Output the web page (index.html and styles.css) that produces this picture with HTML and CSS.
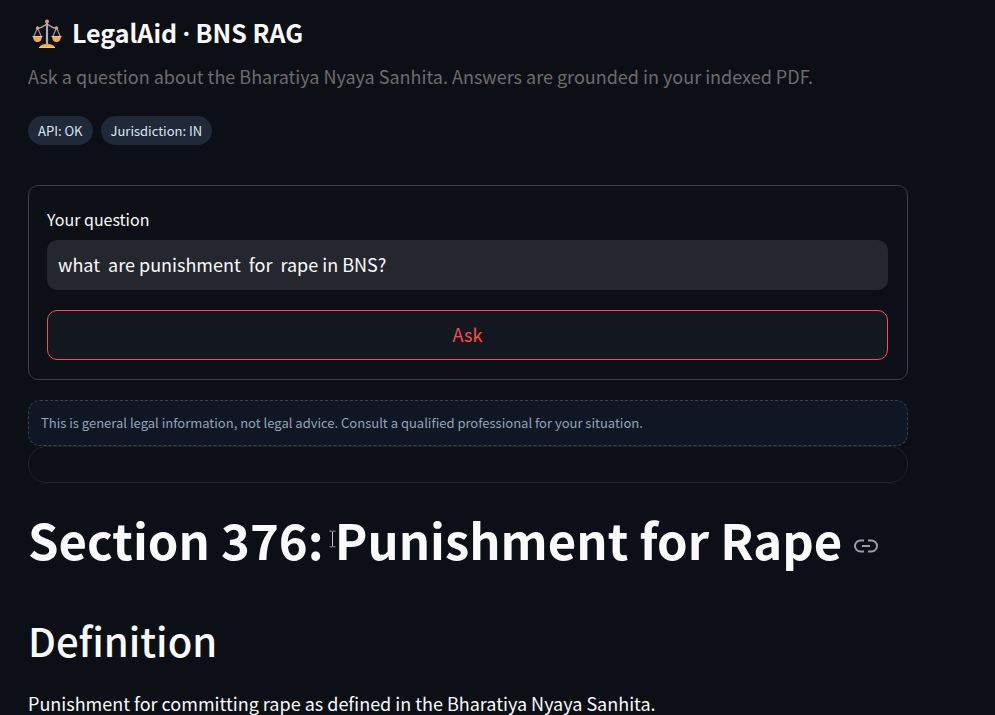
FILE: index.html
```html
<!DOCTYPE html>
<html lang="en">
<head>
<meta charset="utf-8">
<meta name="viewport" content="width=device-width, initial-scale=1">
<title>LegalAid · BNS RAG</title>
<link rel="stylesheet" href="styles.css">
</head>
<body>
<main class="page">
  <header class="header">
    <div class="brand">
      <svg class="brand-icon" viewBox="0 0 30 30" aria-hidden="true">
        <g fill="none" stroke="#998ea1" stroke-width="1.200">
          <path d="M5.500 9 1.500 18M5.500 9 9.500 18M24.500 9 20.500 18M24.500 9 28.500 18"/>
        </g>
        <path d="M5 9.500Q10 9 12.500 6.500Q15 4.500 17.500 6.500Q20 9 25 9.500" fill="none" stroke="#aaa0b2" stroke-width="1.500"/>
        <path d="M15 4V25" stroke="#b4a9bb" stroke-width="2.200"/>
        <path d="M1 17.500H10Q9.500 23 5.500 23T1 17.500ZM20 17.500H29Q28.500 23 24.500 23T20 17.500Z" fill="#f2a968"/>
        <path d="M0.500 17.500H10.500M19.500 17.500H29.500" stroke="#ffc879"/>
        <path d="M7 29Q8 25 15 25T23 29Z" fill="#f5b447"/>
        <path d="M7 28.500H23" stroke="#ffcf59"/>
        <g fill="#e99b65"><circle cx="15" cy="2.500" r="2"/><circle cx="5.500" cy="9" r="1.700"/><circle cx="24.500" cy="9" r="1.700"/></g>
      </svg>
      <span>LegalAid <span class="dot">·</span> BNS RAG</span>
    </div>
    <p class="tagline">Ask a question about the Bharatiya Nyaya Sanhita. Answers are grounded in your indexed PDF.</p>
    <div class="pills">
      <span class="pill">API: OK</span>
      <span class="pill">Jurisdiction: IN</span>
    </div>
  </header>

  <form class="ask-form">
    <label class="label" for="question">Your question</label>
    <input class="question" id="question" type="text" value="what  are punishment  for  rape in BNS?">
    <button class="ask" type="button">Ask</button>
  </form>

  <div class="notice">This is general legal information, not legal advice. Consult a qualified professional for your situation.</div>
  <div class="card"></div>

  <article class="answer">
    <h1 class="title" id="section-376">Section 376: <span class="anchor-word"><svg class="caret" viewBox="0 0 7 17" aria-hidden="true"><path d="M0.500 0.500H3M4 0.500H6.500M3.500 1V16M0.500 16.500H3M4 16.500H6.500"/></svg>Punishment</span> for Rape<a class="permalink" href="#section-376" aria-label="Link to heading"><svg viewBox="0 0 24 24" aria-hidden="true"><path d="M10 6.500H6.500a5.500 5.500 0 0 0 0 11H10M14 6.500H17.500a5.500 5.500 0 0 1 0 11H14M8 12H16"/></svg></a></h1>
    <h2 class="subtitle">Definition</h2>
    <p class="text">Punishment for committing rape as defined in the Bharatiya Nyaya Sanhita.</p>
  </article>
</main>
</body>
</html>
```
FILE: styles.css
```css
* {
  box-sizing: border-box;
}

body {
  margin: 0;
  background: #0c0f16;
  color: #fafafa;
  font-family: "Noto Sans CJK SC", "Noto Sans", sans-serif;
  font-size: 18px;
  line-height: 28px;
}

.page {
  max-width: 936px;
  padding: 14px 28px 0;
}

h1, h2, p {
  margin: 0;
}

.brand {
  display: flex;
  align-items: center;
  gap: 10px;
  padding-left: 4px;
  font-size: 25px;
  font-weight: 700;
  line-height: 36px;
}

.brand-icon {
  width: 30px;
  height: 30px;
  margin-top: 3px;
}

.dot {
  font-family: "Open Sans", "Noto Sans", sans-serif;
  line-height: 1;
}

.tagline {
  margin-top: 12px;
  color: #6c6c6e;
}

.pills {
  display: flex;
  gap: 8px;
  margin-top: 26px;
}

.pill {
  padding: 4px 10px 3px;
  border-radius: 16px;
  background: #1f2937;
  color: #dbe6f5;
  font-size: 13px;
  line-height: 22px;
}

.ask-form {
  display: flex;
  flex-direction: column;
  margin-top: 40px;
  padding: 19px 19px 19px 18px;
  border: 1px solid #3c3e42;
  border-radius: 10px;
}

.label {
  font-size: 16px;
}

.question,
.ask {
  width: 100%;
  height: 50px;
  border-radius: 10px;
  font: inherit;
}

.question {
  margin-top: 7px;
  padding: 0 11px 2px;
  border: 0;
  background: #25272f;
  color: #fafafa;
}

.ask {
  margin-top: 20px;
  padding: 0 0 2px;
  border: 1px solid #ff4b4b;
  background: #13171f;
  color: #ff4b4b;
}

.notice {
  margin-top: 20px;
  padding: 8px 12px;
  border: 1px dashed #334155;
  border-radius: 12px;
  background: #0f1724;
  color: #94a3b8;
  font-size: 13px;
}

.card {
  height: 37px;
  border: 1px solid #202328;
  border-radius: 18px;
}

.answer {
  margin-top: 23px;
}

.title {
  font-size: 49px;
  font-weight: 700;
  line-height: 66px;
  white-space: nowrap;
}

.anchor-word {
  position: relative;
}

.caret {
  position: absolute;
  left: -6px;
  top: 50%;
  width: 7px;
  height: 17px;
  transform: translateY(-50%);
  fill: none;
  stroke: #c8c8c8;
}

.permalink {
  display: inline-block;
  width: 24px;
  height: 26px;
  margin-left: 12px;
}

.permalink svg {
  display: block;
  width: 24px;
  height: 24px;
  fill: none;
  stroke: #9c9da0;
  stroke-width: 2;
}

.subtitle {
  margin-top: 41px;
  font-size: 40px;
  font-weight: 500;
  line-height: 54px;
}

.text {
  margin-top: 22px;
}
```
